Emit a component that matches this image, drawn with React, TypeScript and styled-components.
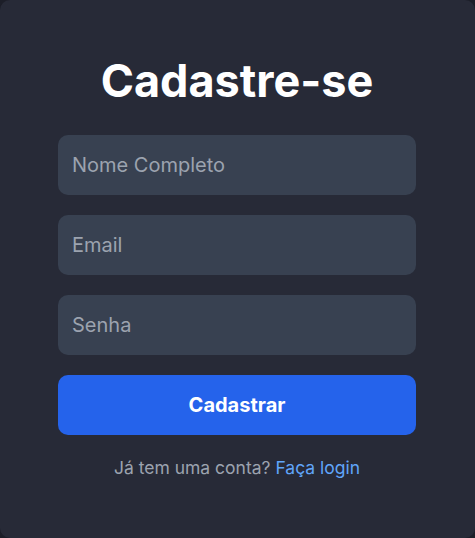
import React from "react";
import styled, { createGlobalStyle } from "styled-components";

const Global = createGlobalStyle`
  html, body { margin: 0; padding: 0; background: #1c1e28; }
  body { font-family: Inter, "Noto Sans", sans-serif; }
  * { box-sizing: border-box; }
`;

const Card = styled.div`
  width: 475px;
  height: 538px;
  background: #272a37;
  border-radius: 10px;
  padding: 53px 59px 0 58px;
  display: flex;
  flex-direction: column;
`;

const Title = styled.h1`
  margin: 0 0 27px;
  font-size: 45px;
  font-weight: 700;
  color: #ffffff;
  text-align: center;
  line-height: normal;
`;

const Form = styled.form`
  display: flex;
  flex-direction: column;
  gap: 20px;
`;

const Input = styled.input`
  height: 60px;
  width: 100%;
  border: none;
  outline: none;
  border-radius: 10px;
  background: #384151;
  padding: 0 14px;
  font-family: Inter, sans-serif;
  font-size: 20px;
  color: #ffffff;
  &::placeholder { color: #9ca3af; }
`;

const Button = styled.button`
  height: 60px;
  width: 100%;
  border: none;
  border-radius: 10px;
  background: #2563eb;
  color: #ffffff;
  font-family: Inter, sans-serif;
  font-size: 20px;
  font-weight: 700;
  cursor: pointer;
`;

const Footer = styled.p`
  margin: 22px 0 0;
  text-align: center;
  font-size: 17.5px;
  color: #9ca3af;
  line-height: normal;
`;

const Link = styled.a`
  color: #60a5fa;
  text-decoration: none;
`;

export default function App() {
  return (
    <>
      <Global />
      <Card>
        <Title>Cadastre-se</Title>
        <Form onSubmit={(e) => e.preventDefault()}>
          <Input type="text" placeholder="Nome Completo" />
          <Input type="email" placeholder="Email" />
          <Input type="password" placeholder="Senha" />
          <Button type="submit">Cadastrar</Button>
        </Form>
        <Footer>
          Já tem uma conta? <Link href="#">Faça login</Link>
        </Footer>
      </Card>
    </>
  );
}
